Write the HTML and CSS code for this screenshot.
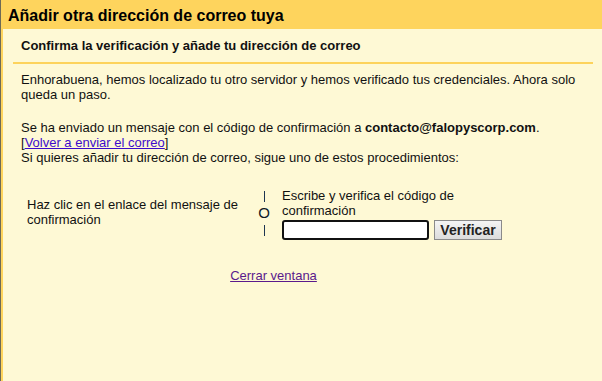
FILE: index.html
```html
<!DOCTYPE html>
<html lang="es">
<head>
    <meta charset="UTF-8">
    <title>Añadir otra dirección de correo tuya</title>
    <link rel="stylesheet" href="styles.css">
</head>
<body>
    <div class="window">
        <div class="title-bar">Añadir otra dirección de correo tuya</div>
        <div class="panel">
            <div class="step-title">Confirma la verificación y añade tu dirección de correo</div>
            <div class="content">
                <p class="intro">Enhorabuena, hemos localizado tu otro servidor y hemos verificado tus credenciales. Ahora solo queda un paso.</p>
                <p class="sent">
                    Se ha enviado un mensaje con el código de confirmación a <b>contacto@falopyscorp.com</b>.<br>
                    [<a href="#" class="resend">Volver a enviar el correo</a>]<br>
                    Si quieres añadir tu dirección de correo, sigue uno de estos procedimientos:
                </p>
                <div class="options">
                    <div class="option-link">Haz clic en el enlace del mensaje de confirmación</div>
                    <div class="divider">
                        <span class="bar"></span>
                        <span class="or">O</span>
                        <span class="bar"></span>
                    </div>
                    <div class="option-code">
                        <label for="code">Escribe y verifica el código de confirmación</label>
                        <div class="code-row">
                            <input type="text" id="code" class="code-input">
                            <button class="verify-button">Verificar</button>
                        </div>
                    </div>
                </div>
                <div class="close-row"><a href="#" class="close-link">Cerrar ventana</a></div>
            </div>
        </div>
    </div>
</body>
</html>
```

FILE: styles.css
```css
body, html {
    margin: 0;
    padding: 0;
    height: 100%;
    font-family: 'Liberation Sans', Arial, sans-serif;
    font-size: 13px;
    color: #111;
    background-color: #fef9d5;
}

.window {
    min-height: 100%;
    border-left: 1px solid #6e6a55;
    box-sizing: border-box;
}

.title-bar {
    background-color: #fed45d;
    height: 29px;
    line-height: 31px;
    padding-left: 7px;
    font-size: 16px;
    font-weight: bold;
    color: #000;
}

.panel {
    border-left: 2px solid #fed45d;
    min-height: calc(100vh - 29px);
    box-sizing: border-box;
}

.step-title {
    margin: 0 9px 0 10px;
    padding: 9px 8px 9px 8px;
    font-weight: bold;
    border-bottom: 2px solid #fdd35c;
}

.content {
    padding: 0 14px 0 18px;
}

p {
    margin: 0;
}

.intro {
    padding-top: 8px;
    line-height: 15px;
}

.sent {
    margin-top: 18px;
    line-height: 15px;
}

.resend {
    color: #3d0ccc;
}

.options {
    display: flex;
    align-items: center;
    margin-top: 23px;
    line-height: 15px;
}

.option-link {
    width: 223px;
    padding-left: 6px;
    margin-top: -4px;
}

/* the "| O |" separator between the two choices */
.divider {
    display: flex;
    flex-direction: column;
    align-items: center;
    width: 28px;
    margin-top: -2px;
}

.divider .bar {
    display: block;
    width: 1px;
    height: 11px;
    background-color: #1d3550;
}

.divider .or {
    font-size: 15px;
    line-height: 14px;
    margin: 4px 0 5px;
    color: #0d1a28;
}

.option-code {
    width: 240px;
    margin-left: 4px;
}

.code-row {
    display: flex;
    align-items: center;
    margin-top: 2px;
}

.code-input {
    width: 143px;
    height: 16px;
    margin: 0;
    padding: 0;
    border: 2px solid #111;
    border-radius: 3px;
    background: #fff;
}

.verify-button {
    margin-left: 5px;
    height: 20px;
    width: 68px;
    padding: 0;
    font-family: 'Liberation Sans', Arial, sans-serif;
    font-size: 14px;
    font-weight: bold;
    color: #222;
    background: linear-gradient(#f4f4f4, #dcdcdc);
    border: 1px solid #8a8a8a;
    border-radius: 0;
}

.close-row {
    text-align: center;
    margin-top: 28px;
    padding-right: 62px;
}

.close-link {
    color: #5a1a8c;
}
```
